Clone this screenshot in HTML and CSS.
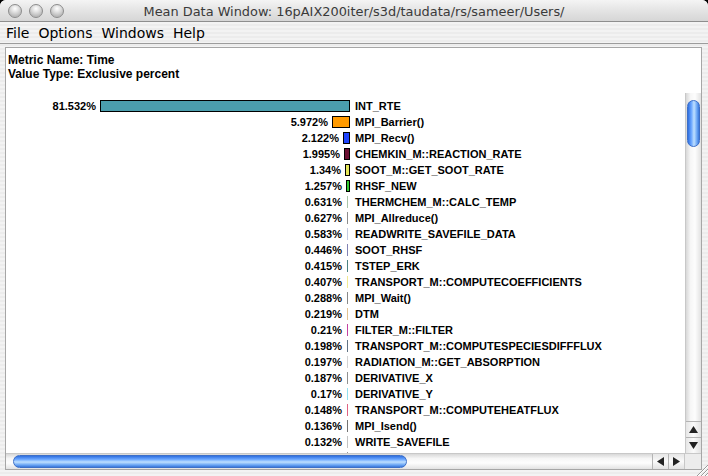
FILE: index.html
```html
<!DOCTYPE html>
<html>
<head>
<meta charset="utf-8">
<link rel="stylesheet" href="styles.css">
</head>
<body>
<div class="window">
  <div class="titlebar">
    <div class="lights">
      <span class="light"></span><span class="light"></span><span class="light"></span>
    </div>
    <div class="title">Mean Data Window: 16pAIX200iter/s3d/taudata/rs/sameer/Users/</div>
  </div>
  <div class="menubar">
    <span class="menu">File</span><span class="menu">Options</span><span class="menu">Windows</span><span class="menu">Help</span>
  </div>
  <div class="content">
    <div class="pane">
      <div class="header">
        <div>Metric Name: Time</div>
        <div>Value Type: Exclusive percent</div>
      </div>
      <div class="scrollarea">
        <div class="chart">
          <div class="row"><div class="left"><span class="pct">81.532%</span><span class="bar" style="width:248px;background:#4b9ead"></span></div><span class="label">INT_RTE</span></div>
          <div class="row"><div class="left"><span class="pct">5.972%</span><span class="bar" style="width:16px;background:#ff9a00"></span></div><span class="label">MPI_Barrier()</span></div>
          <div class="row"><div class="left"><span class="pct">2.122%</span><span class="bar" style="width:5px;background:#1f44ff"></span></div><span class="label">MPI_Recv()</span></div>
          <div class="row"><div class="left"><span class="pct">1.995%</span><span class="bar" style="width:4px;background:#6a0f32"></span></div><span class="label">CHEMKIN_M::REACTION_RATE</span></div>
          <div class="row"><div class="left"><span class="pct">1.34%</span><span class="bar" style="width:3px;background:#e6e85a"></span></div><span class="label">SOOT_M::GET_SOOT_RATE</span></div>
          <div class="row"><div class="left"><span class="pct">1.257%</span><span class="bar" style="width:2px;background:#33cc33"></span></div><span class="label">RHSF_NEW</span></div>
          <div class="row"><div class="left"><span class="pct">0.631%</span><span class="tick" style="background:#a8c4a8"></span></div><span class="label">THERMCHEM_M::CALC_TEMP</span></div>
          <div class="row"><div class="left"><span class="pct">0.627%</span><span class="tick" style="background:#8c8c8c"></span></div><span class="label">MPI_Allreduce()</span></div>
          <div class="row"><div class="left"><span class="pct">0.583%</span><span class="tick" style="background:#c4cbe2"></span></div><span class="label">READWRITE_SAVEFILE_DATA</span></div>
          <div class="row"><div class="left"><span class="pct">0.446%</span><span class="tick" style="background:#8282b4"></span></div><span class="label">SOOT_RHSF</span></div>
          <div class="row"><div class="left"><span class="pct">0.415%</span><span class="tick" style="background:#4a8282"></span></div><span class="label">TSTEP_ERK</span></div>
          <div class="row"><div class="left"><span class="pct">0.407%</span><span class="tick" style="background:#f2ea92"></span></div><span class="label">TRANSPORT_M::COMPUTECOEFFICIENTS</span></div>
          <div class="row"><div class="left"><span class="pct">0.288%</span><span class="tick" style="background:#888888"></span></div><span class="label">MPI_Wait()</span></div>
          <div class="row"><div class="left"><span class="pct">0.219%</span><span class="tick" style="background:#e2c290"></span></div><span class="label">DTM</span></div>
          <div class="row"><div class="left"><span class="pct">0.21%</span><span class="tick" style="background:#c442a2"></span></div><span class="label">FILTER_M::FILTER</span></div>
          <div class="row"><div class="left"><span class="pct">0.198%</span><span class="tick" style="background:#607284"></span></div><span class="label">TRANSPORT_M::COMPUTESPECIESDIFFFLUX</span></div>
          <div class="row"><div class="left"><span class="pct">0.197%</span><span class="tick" style="background:#d2d2d2"></span></div><span class="label">RADIATION_M::GET_ABSORPTION</span></div>
          <div class="row"><div class="left"><span class="pct">0.187%</span><span class="tick" style="background:#909090"></span></div><span class="label">DERIVATIVE_X</span></div>
          <div class="row"><div class="left"><span class="pct">0.17%</span><span class="tick" style="background:#92e0f0"></span></div><span class="label">DERIVATIVE_Y</span></div>
          <div class="row"><div class="left"><span class="pct">0.148%</span><span class="tick" style="background:#e06282"></span></div><span class="label">TRANSPORT_M::COMPUTEHEATFLUX</span></div>
          <div class="row"><div class="left"><span class="pct">0.136%</span><span class="tick" style="background:#727272"></span></div><span class="label">MPI_Isend()</span></div>
          <div class="row"><div class="left"><span class="pct">0.132%</span><span class="tick" style="background:#c2c2c2"></span></div><span class="label">WRITE_SAVEFILE</span></div>
          <div class="row"><div class="left"><span class="pct"></span><span class="tick" style="background:#9a9a9a"></span></div><span class="label"></span></div>
        </div>
        <div class="vscroll">
          <div class="vtrack"><div class="vthumb"></div></div>
          <div class="arrow up"><svg width="9" height="7" viewBox="0 0 9 7"><polygon points="4.5,0 9,7 0,7" fill="#222"/></svg></div>
          <div class="arrow down"><svg width="9" height="7" viewBox="0 0 9 7"><polygon points="0,0 9,0 4.5,7" fill="#222"/></svg></div>
        </div>
      </div>
      <div class="hrow">
        <div class="hscroll">
          <div class="htrack"><div class="hthumb"></div></div>
          <div class="harrow"><svg width="7" height="9" viewBox="0 0 7 9"><polygon points="0,4.5 7,0 7,9" fill="#222"/></svg></div>
          <div class="harrow"><svg width="7" height="9" viewBox="0 0 7 9"><polygon points="0,0 7,4.5 0,9" fill="#222"/></svg></div>
        </div>
        <div class="corner"></div>
      </div>
    </div>
    <svg class="grip" width="14" height="14" viewBox="0 0 14 14">
      <line x1="3" y1="14" x2="14" y2="3" stroke="#9a9a9a" stroke-width="1"/>
      <line x1="4" y1="14" x2="14" y2="4" stroke="#ffffff" stroke-width="1"/>
      <line x1="7" y1="14" x2="14" y2="7" stroke="#9a9a9a" stroke-width="1"/>
      <line x1="8" y1="14" x2="14" y2="8" stroke="#ffffff" stroke-width="1"/>
      <line x1="11" y1="14" x2="14" y2="11" stroke="#9a9a9a" stroke-width="1"/>
      <line x1="12" y1="14" x2="14" y2="12" stroke="#ffffff" stroke-width="1"/>
    </svg>
  </div>
</div>
</body>
</html>
```
FILE: styles.css
```css
html, body {
  margin: 0;
  padding: 0;
  background: #000;
}
body {
  width: 708px;
  height: 476px;
  overflow: hidden;
}
.window {
  width: 708px;
  height: 476px;
  display: flex;
  flex-direction: column;
  border-radius: 6px 6px 0 0;
  overflow: hidden;
  background: repeating-linear-gradient(to bottom, #ececec 0px, #ececec 2px, #f3f3f3 2px, #f3f3f3 4px);
}
.titlebar {
  height: 21px;
  border-bottom: 1px solid #8e8e8e;
  display: flex;
  align-items: center;
  position: relative;
  background: linear-gradient(to bottom, #f4f4f4, #e4e4e4 50%, #d6d6d6);
}
.lights {
  display: flex;
  gap: 7px;
  padding-left: 8px;
  position: absolute;
  left: 0;
  top: 4px;
}
.light {
  width: 12px;
  height: 12px;
  border-radius: 50%;
  border: 1px solid #8c8c8c;
  background: radial-gradient(circle at 50% 30%, #ffffff 0%, #e0e0e0 35%, #b8b8b8 75%, #d6d6d6 100%);
}
.title {
  flex: 1;
  text-align: center;
  font-family: "DejaVu Sans", sans-serif;
  font-size: 12.9px;
  color: #3a3a3a;
  padding-top: 1px;
}
.menubar {
  height: 21px;
  border-bottom: 1px solid #9c9c9c;
  display: flex;
  align-items: center;
  padding-left: 6px;
  gap: 9px;
  font-family: "DejaVu Sans", sans-serif;
  font-size: 14px;
  color: #000;
}
.content {
  flex: 1;
  display: flex;
  padding: 3px 6px 6px 5px;
  position: relative;
}
.pane {
  flex: 1;
  display: flex;
  flex-direction: column;
  background: #fff;
  border: 1px solid #a6a6a6;
}
.header {
  height: 45px;
  padding: 5px 0 0 2px;
  box-sizing: border-box;
  font-family: "Liberation Sans", Arial, sans-serif;
  font-weight: bold;
  font-size: 12px;
  line-height: 14px;
  color: #000;
}
.scrollarea {
  height: 360px;
  display: flex;
}
.chart {
  flex: 1;
  overflow: hidden;
  padding-top: 5px;
  font-family: "Liberation Sans", Arial, sans-serif;
  font-weight: bold;
  font-size: 11px;
  color: #000;
}
.row {
  height: 16px;
  display: flex;
  align-items: center;
}
.left {
  width: 344px;
  display: flex;
  justify-content: flex-end;
  align-items: center;
  gap: 4px;
  flex: none;
}
.bar {
  height: 10px;
  border: 1px solid #000;
  flex: none;
}
.tick {
  width: 1px;
  height: 12px;
  margin-right: 2px;
  margin-left: 1px;
  flex: none;
}
.label {
  margin-left: 5px;
  white-space: nowrap;
}
.vscroll {
  width: 15px;
  display: flex;
  flex-direction: column;
  border-left: 1px solid #c8c8c8;
  background: #f4f4f4;
}
.vtrack {
  flex: 1;
  background: linear-gradient(to right, #d8d8d8, #f6f6f6 30%, #fdfdfd 60%, #e2e2e2);
  padding: 7px 1px 0 1px;
}
.vthumb {
  height: 47px;
  border-radius: 7px;
  border: 1px solid #3c6fc8;
  background: linear-gradient(to right, #2f6fe0, #6aa6ff 30%, #bfe0ff 55%, #6ea8f6 80%, #3a78da);
  box-sizing: border-box;
}
.arrow {
  height: 15px;
  display: flex;
  align-items: center;
  justify-content: center;
  background: linear-gradient(to right, #e6e6e6, #fafafa 50%, #e2e2e2);
  border-top: 1px solid #b4b4b4;
}
.hrow {
  height: 16px;
  display: flex;
  border-top: 1px solid #c8c8c8;
  box-sizing: border-box;
}
.hscroll {
  flex: 1;
  display: flex;
}
.htrack {
  flex: 1;
  padding: 1px 0 0 7px;
  background: linear-gradient(to bottom, #d8d8d8, #f6f6f6 30%, #fdfdfd 60%, #e2e2e2);
}
.hthumb {
  width: 394px;
  height: 13px;
  border-radius: 7px;
  border: 1px solid #3c6fc8;
  box-sizing: border-box;
  background: linear-gradient(to bottom, #2f6fe0, #6aa6ff 30%, #bfe0ff 55%, #6ea8f6 80%, #3a78da);
}
.harrow {
  width: 15px;
  display: flex;
  align-items: center;
  justify-content: center;
  border-left: 1px solid #b4b4b4;
  background: linear-gradient(to bottom, #e6e6e6, #fafafa 50%, #e2e2e2);
}
.corner {
  width: 16px;
  background: #ececec;
  border-left: 1px solid #c8c8c8;
}
.grip {
  position: absolute;
  right: 0;
  bottom: 0;
}
```
